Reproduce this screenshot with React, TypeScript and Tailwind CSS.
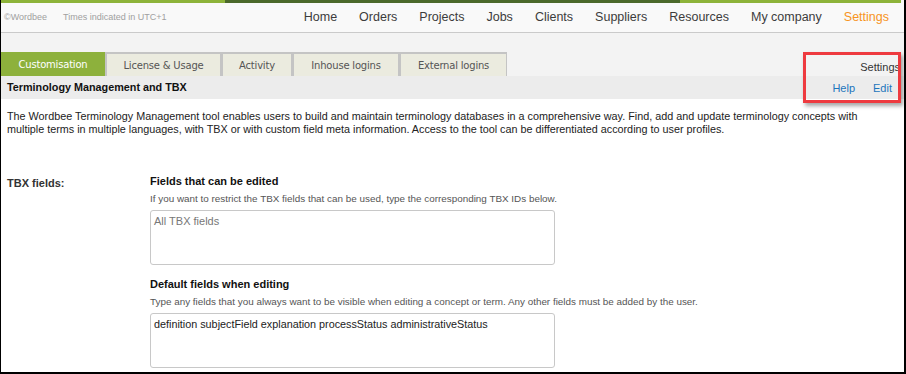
import React from "react";

const navItems = ["Home", "Orders", "Projects", "Jobs", "Clients", "Suppliers", "Resources", "My company"];

const tabs: { label: string; w: string; active?: boolean }[] = [
  { label: "Customisation", w: "w-[104px]", active: true },
  { label: "License & Usage", w: "w-[116px]" },
  { label: "Activity", w: "w-[71px]" },
  { label: "Inhouse logins", w: "w-[107px]" },
  { label: "External logins", w: "w-[108px]" },
];

export default function App() {
  return (
    <div className="relative w-[906px] h-[374px] overflow-hidden bg-white border-l border-r-2 border-b-2 border-black font-['Liberation_Sans',Arial,sans-serif] text-[#222]">
      {/* top color strip */}
      <div className="flex h-[3px]">
        <div className="w-[224px] bg-[#8db33a]" />
        <div className="w-[455px] bg-[#4b692b]" />
        <div className="flex-1 bg-[#8db33a]" />
        <div className="w-[3px] bg-[#f9f9f9]" />
      </div>
      {/* header */}
      <div className="flex items-center h-[30px] bg-[#f9f9f9] border-b border-[#cacaca]">
        <span className="ml-[3px] text-[9px] text-[#a0a0a0]">©Wordbee</span>
        <span className="ml-[16px] text-[9px] text-[#a0a0a0]">Times indicated in UTC+1</span>
        <nav className="ml-auto mr-[15px] flex gap-[22px] text-[12.5px] text-[#3c3c3c]">
          {navItems.map((n) => (
            <span key={n}>{n}</span>
          ))}
          <span className="text-[#f7941d]">Settings</span>
        </nav>
      </div>
      {/* tabs row */}
      <div className="flex items-end bg-[#f3f3f3] pt-[19px]">
        <div className="flex">
          {tabs.map((t) =>
            t.active ? (
              <div
                key={t.label}
                className={`${t.w} h-[24px] flex items-center justify-center bg-[#8db13c] text-white text-[10px] font-['DejaVu_Sans',Verdana,sans-serif] tracking-[-0.2px]`}
              >
                {t.label}
              </div>
            ) : (
              <div
                key={t.label}
                className={`${t.w} h-[24px] flex items-center justify-center bg-[#ebebdf] border-t-2 border-l-2 border-r border-[#c4c4c4] text-[#555] text-[10px] font-['DejaVu_Sans',Verdana,sans-serif] tracking-[-0.2px]`}
              >
                {t.label}
              </div>
            )
          )}
        </div>
        <div className="ml-auto mr-[4px] mb-[1px] text-[11px] text-[#333]">Settings</div>
      </div>
      {/* section bar */}
      <div className="flex items-center h-[23px] bg-[#ececec] pl-[6px] pr-[12px]">
        <span className="font-bold text-[10.8px] text-[#111]">Terminology Management and TBX</span>
        <div className="ml-auto mt-[2px] flex gap-[18px] text-[11px] text-[#1c75bc]">
          <span>Help</span>
          <span>Edit</span>
        </div>
      </div>
      {/* body */}
      <div className="px-[6px] pt-[11px]">
        <p className="text-[10.8px] leading-[13px] text-[#222] w-[880px]">
          The Wordbee Terminology Management tool enables users to build and maintain terminology databases in a comprehensive way. Find, add and update terminology concepts with multiple terms in multiple languages, with TBX or with custom field meta information. Access to the tool can be differentiated according to user profiles.
        </p>
        <div className="mt-[39px] grid grid-cols-[143px_1fr]">
          <div className="font-bold text-[11px] text-[#333]">TBX fields:</div>
          <div className="flex flex-col">
            <div className="font-bold text-[11px] text-[#111] leading-[13px]">Fields that can be edited</div>
            <div className="mt-[5px] text-[9.9px] text-[#555] leading-[12px]">
              If you want to restrict the TBX fields that can be used, type the corresponding TBX IDs below.
            </div>
            <div className="mt-[5px] w-[405px] h-[55px] rounded-[3px] border border-[#c8c8c8] bg-white px-[3px] py-[2px] text-[11px] text-[#777]">
              All TBX fields
            </div>
            <div className="mt-[13px] font-bold text-[11px] text-[#111] leading-[13px]">Default fields when editing</div>
            <div className="mt-[5px] text-[9.9px] text-[#555] leading-[12px]">
              Type any fields that you always want to be visible when editing a concept or term. Any other fields must be added by the user.
            </div>
            <div className="mt-[5px] w-[405px] h-[55px] rounded-[3px] border border-[#c8c8c8] bg-white px-[3px] py-[2px] text-[10.8px] text-[#222]">
              definition subjectField explanation processStatus administrativeStatus
            </div>
          </div>
        </div>
      </div>
      {/* red annotation box */}
      <div className="absolute left-[802px] top-[52px] w-[98px] h-[51px] border-[3px] border-[#ee3a3f] shadow-[2px_3px_4px_rgba(0,0,0,0.35)]" />
    </div>
  );
}
